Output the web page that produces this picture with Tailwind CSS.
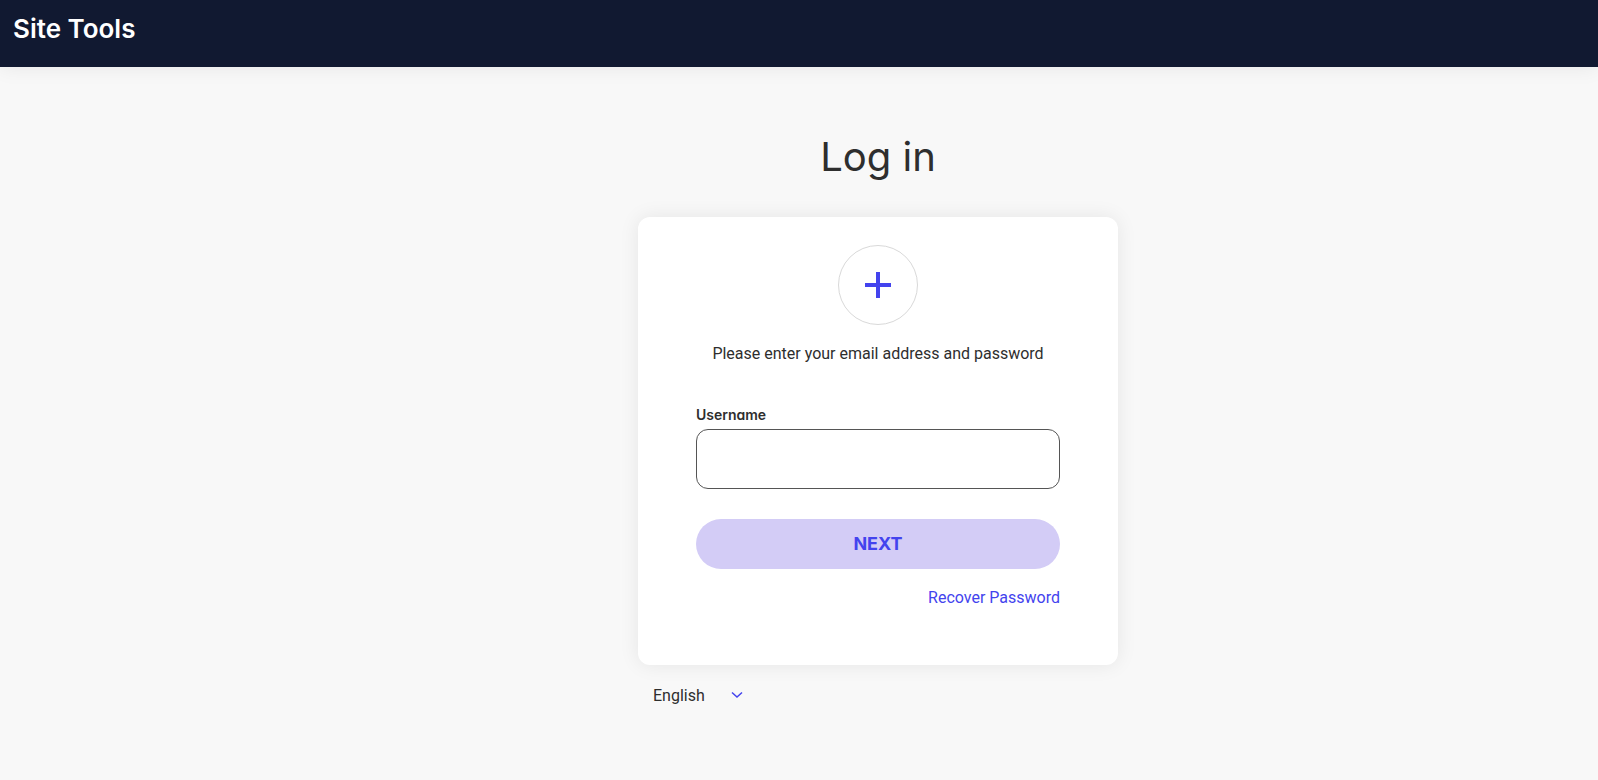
<!DOCTYPE html>
<html lang="en">
<head>
  <meta charset="UTF-8" />
  <meta name="viewport" content="width=device-width, initial-scale=1.0"/>
  <title>Log in - Site Tools</title>
  <script src="https://cdn.jsdelivr.net/npm/@tailwindcss/browser@4"></script>
</head>
<body class="min-h-screen bg-[#f8f8f8] font-[Roboto,sans-serif] text-base text-[#2e2e2e]">
  <header class="bg-[#111931] px-[13px] pt-[9px] pb-[19px] shadow-[0_0_20px_rgba(0,0,0,0.08)]">
    <p class="font-[Inter,sans-serif] text-[26px] leading-[39px] font-semibold text-white">Site Tools</p>
  </header>

  <main class="flex flex-col items-center pt-15 pb-10 lg:pl-[158px]">
    <h1 class="mb-[30px] font-[Inter,sans-serif] text-[40px] leading-[60px]">Log in</h1>

    <div class="w-full max-w-[480px]">
      <form id="loginForm" class="flex flex-col rounded-xl bg-white px-[58px] pt-7 pb-[55px] shadow-[0_0_20px_rgba(0,0,0,0.08)]">
        <div class="flex size-20 items-center justify-center self-center rounded-full border border-[#d9d9d9]">
          <svg class="size-[26px]" viewBox="0 0 26 26" fill="#4343ee" aria-hidden="true">
            <path d="M11 0h4v11h11v4H15v11h-4V15H0v-4h11z"/>
          </svg>
        </div>
        <p class="mt-[17px] text-center">Please enter your email address and password</p>

        <label for="username" class="mt-[39px] mb-1 font-[Inter,sans-serif] text-sm font-semibold [font-feature-settings:'cv11']">Username</label>
        <input type="text" id="username" name="username" class="h-15 w-full rounded-xl border border-[#555555] bg-white px-4 outline-none"/>

        <button type="submit" class="mt-[30px] h-[50px] w-full rounded-full bg-[#d3ccf6] font-[Inter,sans-serif] text-lg font-bold text-[#4343ee]">NEXT</button>
        <a href="#" class="mt-[17px] self-end text-[#4343ee]">Recover Password</a>
      </form>

      <div class="relative mt-[19px] ml-[15px] w-[92px]">
        <select id="language" aria-label="Language" class="block w-full appearance-none bg-transparent leading-6 outline-none">
          <option>English</option>
        </select>
        <svg class="pointer-events-none absolute inset-y-0 right-0 my-auto size-4" viewBox="0 0 16 16" fill="none" stroke="#4343ee" stroke-width="1.5" aria-hidden="true">
          <path d="M3 4.5l5 4.5 5-4.5"/>
        </svg>
      </div>
    </div>
  </main>

  <script>
    const form = document.getElementById("loginForm");

    form.addEventListener("submit", (e) => {
      e.preventDefault();
      document.getElementById("username").focus();
    });
  </script>
</body>
</html>
